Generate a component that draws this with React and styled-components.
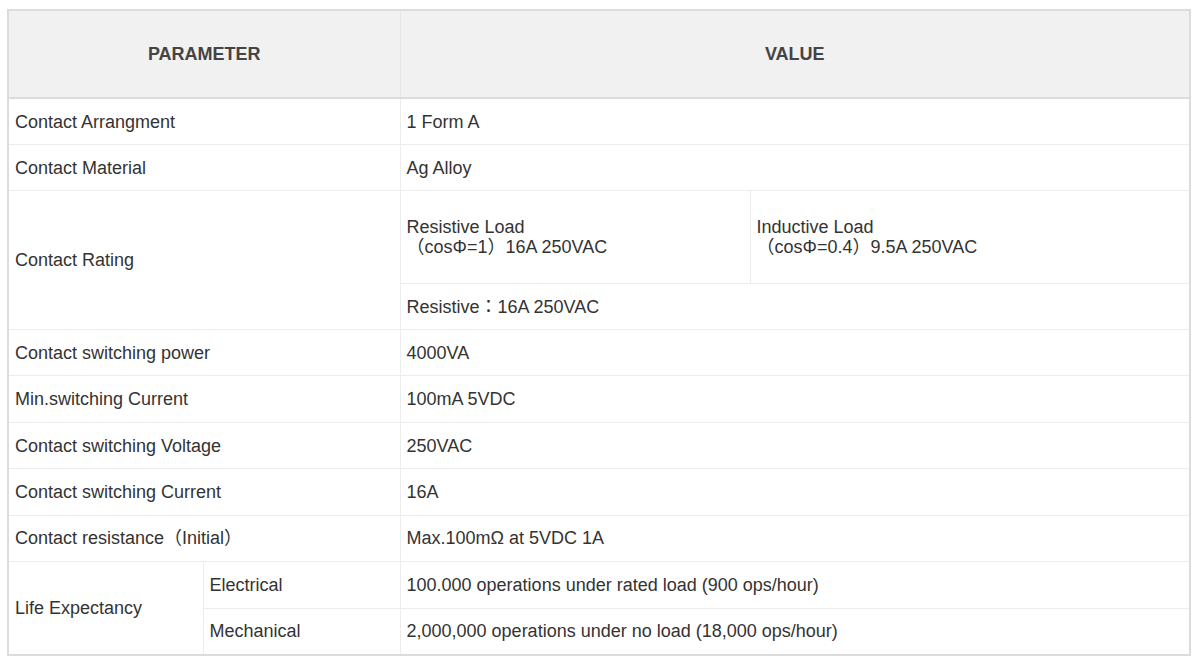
import React from "react";
import styled, { createGlobalStyle } from "styled-components";

const GlobalStyle = createGlobalStyle`
  body {
    margin: 0;
    background: #fff;
    font-family: "Liberation Sans", Arial, "Noto Sans CJK TC", sans-serif;
  }
`;

const Page = styled.div`
  padding: 9px 10px 0 7px;
`;

const SpecTable = styled.table`
  width: 1182px;
  table-layout: fixed;
  border-collapse: collapse;
  border: 2px solid #dcdcdc;
  color: #333;
  font-size: 18px;
  line-height: 20px;
`;

const HeadCell = styled.th`
  height: 86px;
  background: #f1f1f1;
  color: #444;
  font-weight: bold;
  text-align: center;
  border: 1px solid #e6e6e6;
  border-bottom: 2px solid #dcdcdc;
  padding: 0;
`;

const Cell = styled.td`
  height: ${(p) => (p.$tall ? "92px" : p.$loose ? "45.43px" : "45px")};
  padding: 0 6px;
  border: 1px solid #ececec;
  text-align: left;
  vertical-align: middle;
`;

const rows = [
  ["Contact Arrangment", "1 Form A"],
  ["Contact Material", "Ag Alloy"],
];

const rows2 = [
  ["Contact switching power", "4000VA"],
  ["Min.switching Current", "100mA 5VDC"],
  ["Contact switching Voltage", "250VAC"],
  ["Contact switching Current", "16A"],
  ["Contact resistance（Initial）", "Max.100mΩ at 5VDC 1A"],
];

const SimpleRow = ({ label, value, loose }) => (
  <tr>
    <Cell colSpan={2} $loose={loose}>{label}</Cell>
    <Cell colSpan={2} $loose={loose}>{value}</Cell>
  </tr>
);

export default function App() {
  return (
    <Page>
      <GlobalStyle />
      <SpecTable>
        <colgroup>
          <col style={{ width: 195 }} />
          <col style={{ width: 197 }} />
          <col style={{ width: 350 }} />
          <col style={{ width: 440 }} />
        </colgroup>
        <thead>
          <tr>
            <HeadCell colSpan={2}>PARAMETER</HeadCell>
            <HeadCell colSpan={2}>VALUE</HeadCell>
          </tr>
        </thead>
        <tbody>
          {rows.map(([l, v]) => (
            <SimpleRow key={l} label={l} value={v} />
          ))}
          <tr>
            <Cell colSpan={2} rowSpan={2}>Contact Rating</Cell>
            <Cell $tall>
              Resistive Load
              <br />
              （cosΦ=1）16A 250VAC
            </Cell>
            <Cell $tall>
              Inductive Load
              <br />
              （cosΦ=0.4）9.5A 250VAC
            </Cell>
          </tr>
          <tr>
            <Cell colSpan={2}>Resistive：16A 250VAC</Cell>
          </tr>
          {rows2.map(([l, v]) => (
            <SimpleRow key={l} label={l} value={v} loose />
          ))}
          <tr>
            <Cell rowSpan={2} $loose>Life Expectancy</Cell>
            <Cell $loose>Electrical</Cell>
            <Cell colSpan={2} $loose>100.000 operations under rated load (900 ops/hour)</Cell>
          </tr>
          <tr>
            <Cell $loose>Mechanical</Cell>
            <Cell colSpan={2} $loose>2,000,000 operations under no load (18,000 ops/hour)</Cell>
          </tr>
        </tbody>
      </SpecTable>
    </Page>
  );
}
